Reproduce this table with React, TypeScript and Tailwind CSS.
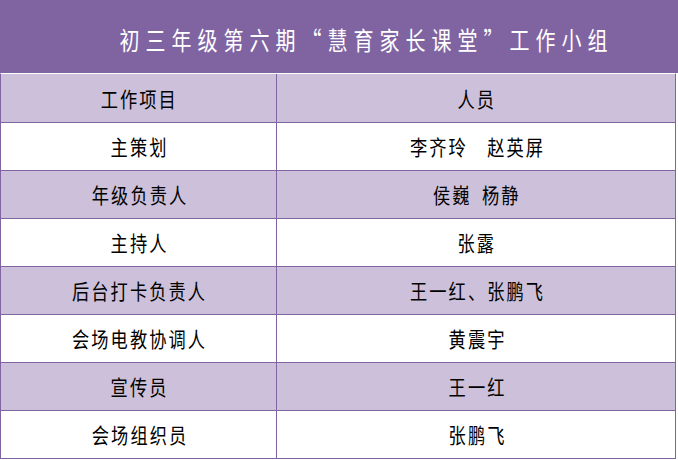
import React from "react";

const rows: [string, string][] = [
  ["主策划", "李齐玲　赵英屏"],
  ["年级负责人", "侯巍\u2002杨静"],
  ["主持人", "张露"],
  ["后台打卡负责人", "王一红、张鹏飞"],
  ["会场电教协调人", "黄震宇"],
  ["宣传员", "王一红"],
  ["会场组织员", "张鹏飞"],
];

function Cell({ text }: { text: string }) {
  return (
    <span className="inline-block scale-x-[0.82] whitespace-pre text-[21px] leading-none tracking-[2.5px] pl-[2.5px] text-black">
      {text}
    </span>
  );
}

export default function App() {
  return (
    <div
      lang="zh-CN"
      className="w-[678px] h-[460px] bg-white overflow-hidden [font-family:'Noto_Sans_CJK_SC','Noto_Sans',sans-serif]"
    >
      <div className="h-[73px] bg-[#8064A2] flex items-center justify-center pl-[50px] pt-[5px]">
        <span className="inline-block scale-x-[0.8] whitespace-pre text-[25px] leading-none tracking-[7.5px] pl-[7.5px] text-white [font-feature-settings:'fwid']">
          初三年级第六期“慧育家长课堂”工作小组
        </span>
      </div>
      <div className="w-[676px] border-l border-r border-[#8064A2] border-t border-t-white">
        <div className="grid grid-cols-[276px_1fr] h-[49px] bg-[#CCC0DA] border-b border-[#8064A2]">
          <div className="flex items-center justify-center border-r border-[#8064A2]">
            <Cell text="工作项目" />
          </div>
          <div className="flex items-center justify-center">
            <Cell text="人员" />
          </div>
        </div>
        {rows.map(([a, b], i) => (
          <div
            key={a}
            className={`grid grid-cols-[276px_1fr] h-[48px] border-b border-[#8064A2] ${
              i % 2 === 0 ? "bg-white" : "bg-[#CCC0DA]"
            }`}
          >
            <div className="flex items-center justify-center border-r border-[#8064A2]">
              <Cell text={a} />
            </div>
            <div className="flex items-center justify-center">
              <Cell text={b} />
            </div>
          </div>
        ))}
      </div>
    </div>
  );
}
